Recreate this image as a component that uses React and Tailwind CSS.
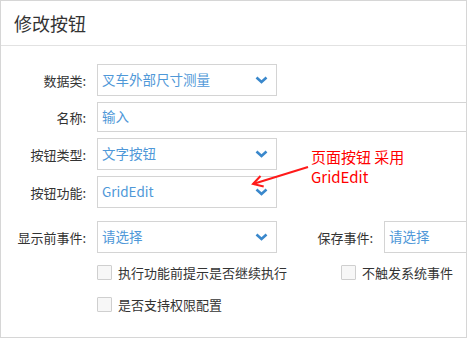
import React from "react";

const font = { fontFamily: '"Noto Sans CJK SC", "Microsoft YaHei", sans-serif' };

function Chevron() {
  return (
    <svg width="13" height="8" viewBox="0 0 13 8" className="shrink-0">
      <path d="M1.5 1.5 L6.5 6 L11.5 1.5" fill="none" stroke="#3a88cc" strokeWidth="2.6" strokeLinecap="butt" strokeLinejoin="miter" />
    </svg>
  );
}

function Select({ value, h = "h-[32px]" }) {
  return (
    <div className={`w-[180px] ${h} shrink-0 border border-[#d4d4d4] bg-white flex items-center justify-between pl-[4px] pr-[8px]`}>
      <span className="text-[13.5px] leading-none text-[#4f98d8]">{value}</span>
      <Chevron />
    </div>
  );
}

function Label({ children, w = "w-[85px]" }) {
  return (
    <div className={`${w} shrink-0 text-right text-[13px] leading-none text-[#333]`}>{children}</div>
  );
}

function Check({ label }) {
  return (
    <div className="flex items-center">
      <span className="w-[15px] h-[15px] border border-[#cfcfcf] bg-[#f7f7f7] rounded-[1px] shrink-0" />
      <span className="ml-[6px] text-[13px] leading-none text-[#333]">{label}</span>
    </div>
  );
}

export default function App() {
  return (
    <div style={font} className="relative w-[467px] h-[338px] border border-[#d6d6d6] bg-white overflow-hidden">
      <div className="h-[45px] border-b border-[#e2e2e2] flex items-center pl-[13px]">
        <h2 className="text-[18px] leading-none text-[#333] font-normal">修改按钮</h2>
      </div>

      <div className="pt-[18px] flex flex-col">
        <div className="flex items-center">
          <Label>数据类:</Label>
          <div className="ml-[11px]"><Select value="叉车外部尺寸测量" /></div>
        </div>

        <div className="flex items-center mt-[6px]">
          <Label>名称:</Label>
          <div className="ml-[11px] w-[480px] h-[30px] shrink-0 border border-[#d4d4d4] flex items-center pl-[4px]">
            <span className="text-[13.5px] leading-none text-[#4f98d8]">输入</span>
          </div>
        </div>

        <div className="flex items-center mt-[6px]">
          <Label>按钮类型:</Label>
          <div className="ml-[11px]"><Select value="文字按钮" /></div>
        </div>

        <div className="flex items-center mt-[6px]">
          <Label>按钮功能:</Label>
          <div className="ml-[11px]"><Select value="GridEdit" /></div>
        </div>

        <div className="flex items-center mt-[13px]">
          <Label>显示前事件:</Label>
          <div className="ml-[11px]"><Select value="请选择" /></div>
          <Label w="w-[96px]">保存事件:</Label>
          <div className="ml-[11px] w-[180px] h-[32px] shrink-0 border border-[#d4d4d4] flex items-center pl-[4px]">
            <span className="text-[13.5px] leading-none text-[#4f98d8]">请选择</span>
          </div>
        </div>

        <div className="flex items-center h-[22px] mt-[8px] pl-[96px]">
          <div className="w-[244px] shrink-0"><Check label="执行功能前提示是否继续执行" /></div>
          <Check label="不触发系统事件" />
        </div>

        <div className="flex items-center h-[22px] mt-[10px] pl-[96px]">
          <Check label="是否支持权限配置" />
        </div>
      </div>

      <div className="absolute left-[310px] top-[146px] text-[15px] leading-[20px] text-[#ff0000]">
        <div>页面按钮 采用</div>
        <div>GridEdit</div>
      </div>

      <svg className="absolute left-[244px] top-[159px]" width="70" height="35" viewBox="0 0 70 35">
        <path d="M63 7 L8 24" fill="none" stroke="#ff1a1a" strokeWidth="2" />
        <path d="M15.5 16 L8 24 L18.7 26.5" fill="none" stroke="#ff1a1a" strokeWidth="2" strokeLinejoin="miter" />
      </svg>
    </div>
  );
}
